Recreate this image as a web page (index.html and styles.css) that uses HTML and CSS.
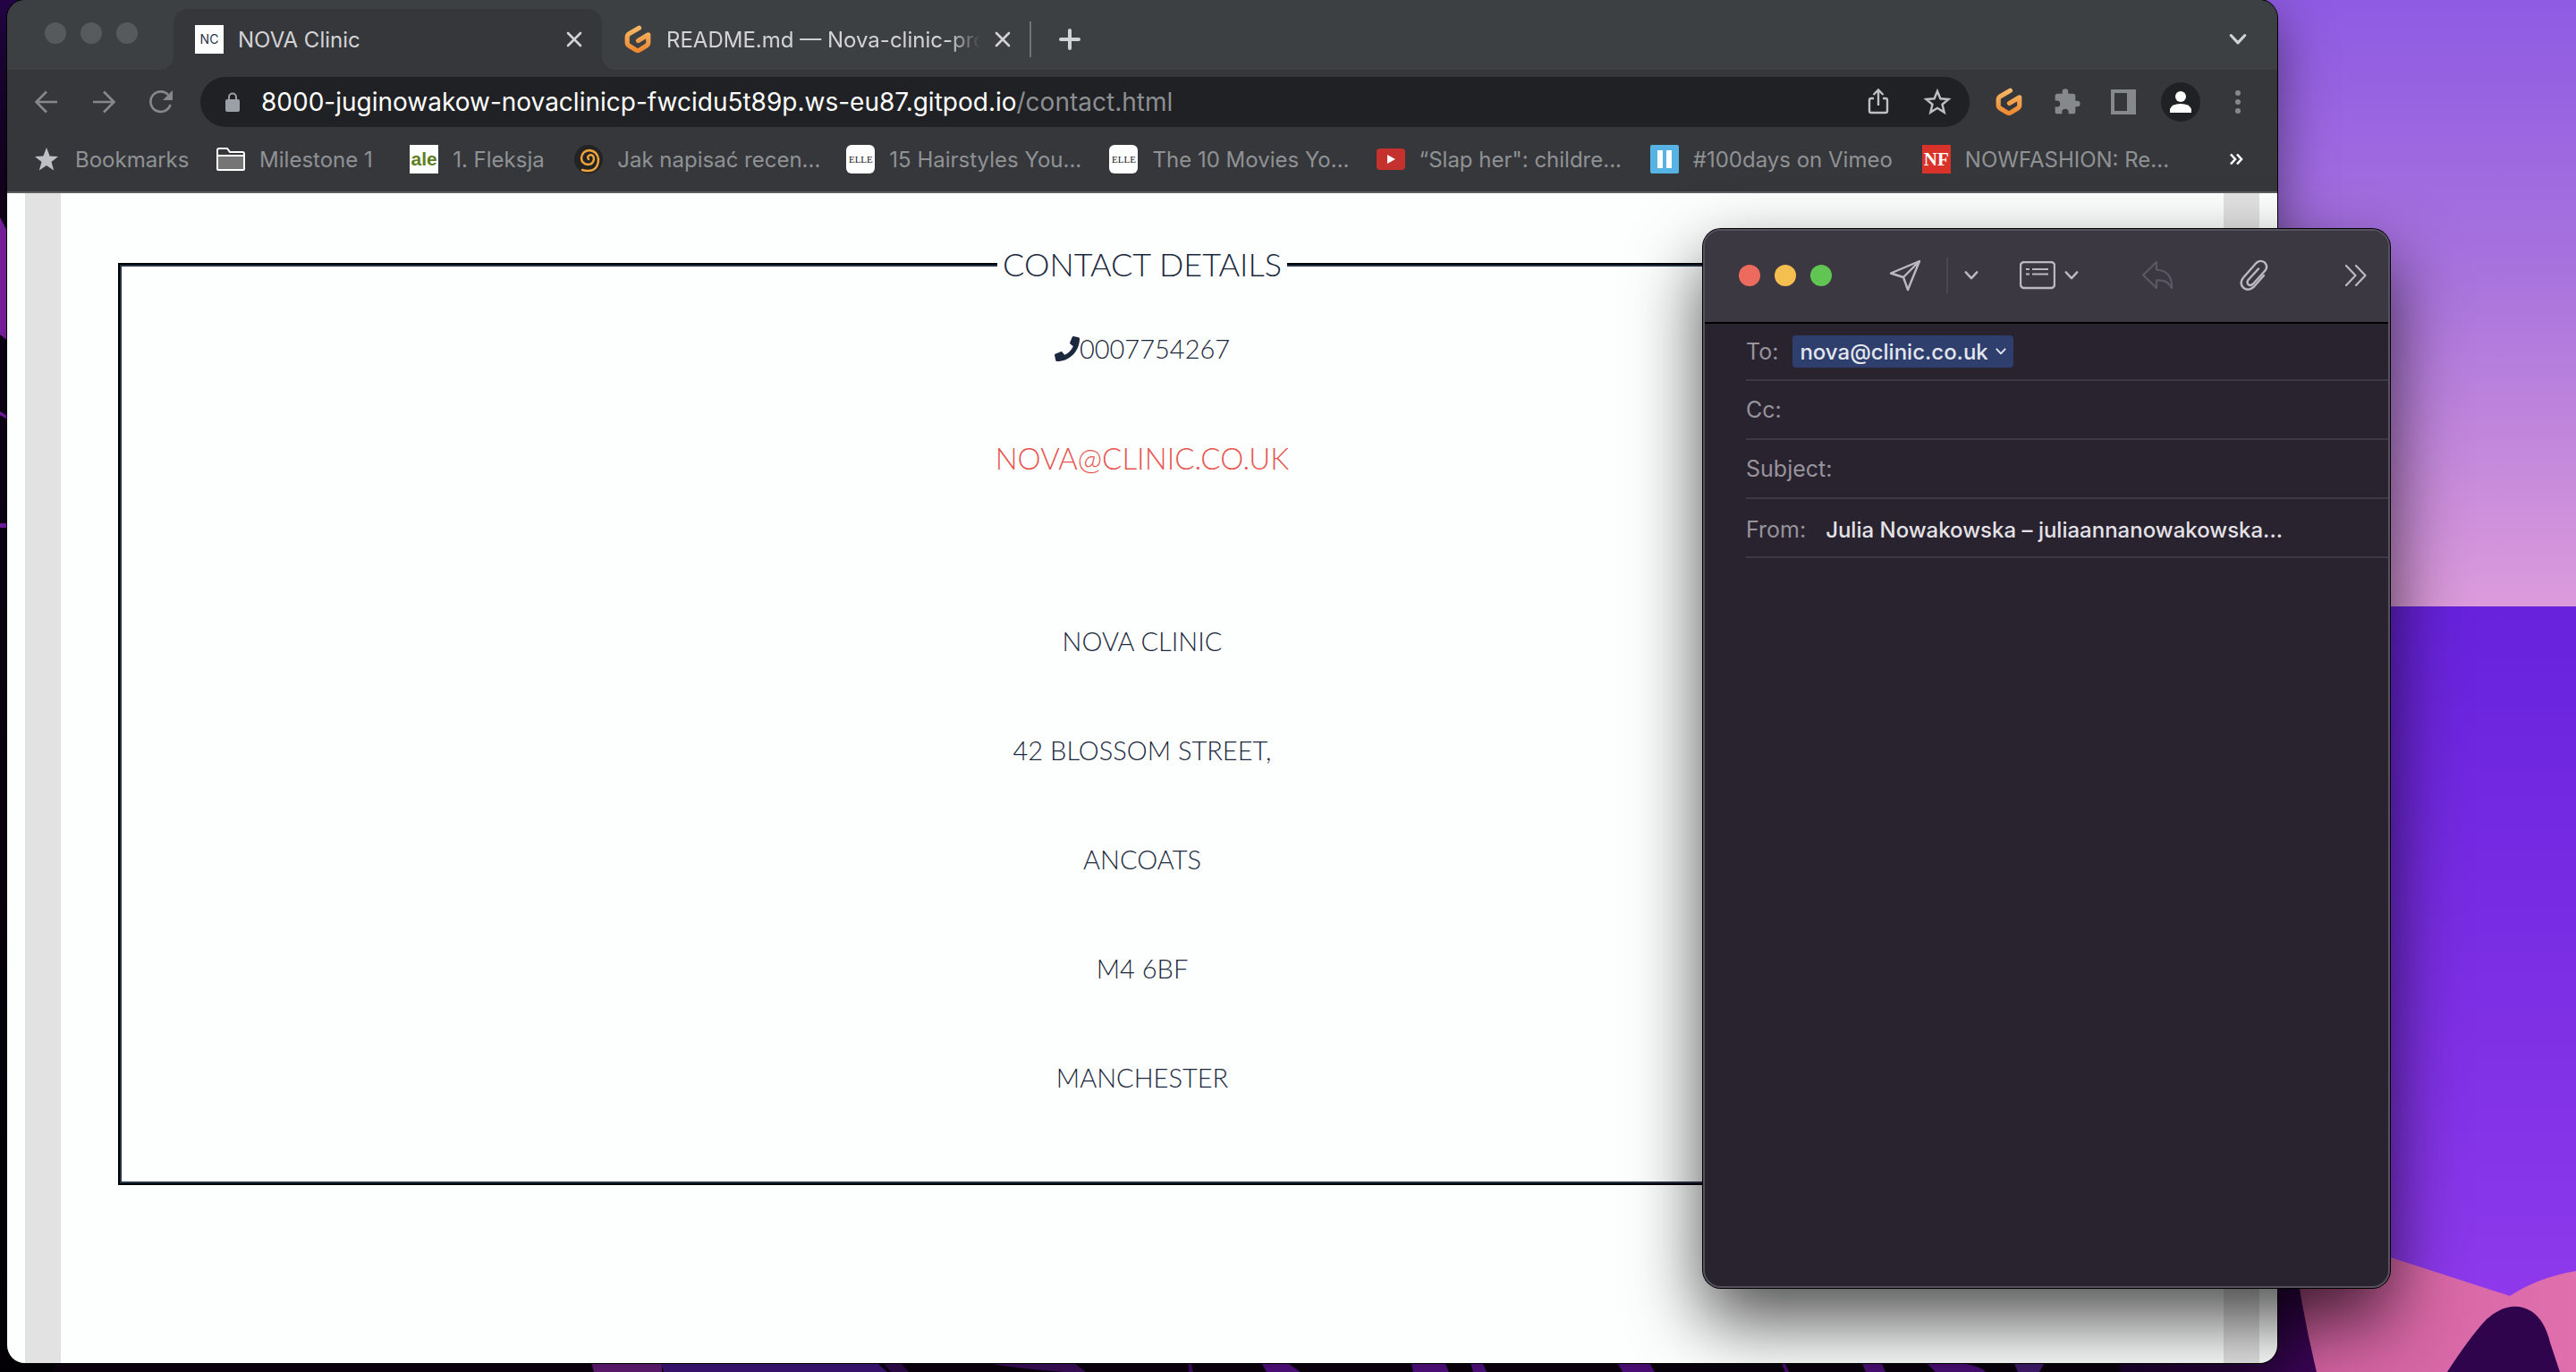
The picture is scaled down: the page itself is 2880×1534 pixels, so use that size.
FILE: index.html
```html
<!DOCTYPE html>
<html lang="en">
<head>
<meta charset="utf-8">
<title>NOVA Clinic</title>
<link rel="stylesheet" href="styles.css">
</head>
<body>
<svg class="defs" aria-hidden="true">
  <defs>
    <linearGradient id="amber" x1="0" y1="0" x2="0" y2="1"><stop offset="0" stop-color="#f5b765"/><stop offset="1" stop-color="#ef8a33"/></linearGradient>
    <symbol id="gitpod" viewBox="0 0 32 32"><path d="M17.500 3.200 L6.800 9.400 Q4.200 11 4.200 13.500 V19.500 Q4.200 22 6.800 23.500 L14 27.900 Q16 29.200 18 27.900 L25.200 23.500 Q27.800 22 27.800 19.500 V10.800 L16.500 17.400" fill="none" stroke="url(#amber)" stroke-width="5.200" stroke-linecap="round" stroke-linejoin="round"/></symbol>
    <symbol id="cross" viewBox="0 0 18 18"><path d="M2 2 16 16M16 2 2 16" fill="none" stroke="currentColor" stroke-width="2.600" stroke-linecap="round"/></symbol>
    <symbol id="down" viewBox="0 0 18 12"><path d="M2 2 9 9.500 16 2" fill="none" stroke="currentColor" stroke-width="2.800" stroke-linecap="round" stroke-linejoin="round"/></symbol>
  </defs>
</svg>

<svg class="wallpaper" viewBox="0 0 2880 1534" preserveAspectRatio="none" aria-hidden="true">
  <defs>
    <linearGradient id="sky" x1="0" y1="0" x2="0" y2="1"><stop offset="0" stop-color="#8f5be3"/><stop offset=".45" stop-color="#a873dd"/><stop offset="1" stop-color="#dc9bdb"/></linearGradient>
    <linearGradient id="sea" x1="0" y1="0" x2="0" y2="1"><stop offset="0" stop-color="#6722dc"/><stop offset="1" stop-color="#8f3aec"/></linearGradient>
    <linearGradient id="night" x1="0" y1="0" x2="0" y2="1"><stop offset="0" stop-color="#25054a"/><stop offset=".15" stop-color="#14001e"/><stop offset="1" stop-color="#040006"/></linearGradient>
    <linearGradient id="hill" x1="0" y1="0" x2="1" y2="0"><stop offset="0" stop-color="#d0609f"/><stop offset="1" stop-color="#e06fae"/></linearGradient>
    <linearGradient id="plum" x1="0" y1="0" x2="1" y2="0"><stop offset="0" stop-color="#26043c"/><stop offset="1" stop-color="#3c0558"/></linearGradient>
  </defs>
  <rect width="2880" height="1534" fill="#0e0012"/>
  <rect width="60" height="1534" fill="url(#night)"/>
  <path d="M0 243 10 262V382L0 374Z" fill="#9425c0"/>
  <path d="M0 460 12 467V471L0 464Z M0 585H12V590H0Z" fill="#8d21c4"/>
  <rect x="2500" width="380" height="678" fill="url(#sky)"/>
  <rect x="2500" y="678" width="380" height="800" fill="url(#sea)"/>
  <path d="M2560 1370 2673 1406 2806 1449Q2838 1428 2880 1421V1534H2560Z" fill="url(#hill)"/>
  <path d="M2500 1380H2562Q2572 1460 2590 1534H2370V1520H2500Z" fill="url(#plum)"/>
  <path d="M2736 1534Q2762 1494 2780 1475Q2806 1452 2830 1466Q2845 1476 2851 1501L2862 1534Z" fill="#30044c"/>
  <path d="M660 1520H740V1534H664Z" fill="#83259a"/>
  <path d="M738 1520H976L992 1534H742Z" fill="#521da0"/>
  <path d="M984 1520H1004L1016 1534H996Z" fill="#3d0d63"/>
  <path d="M1080 1520H1196L1214 1534H1190Q1130 1530 1080 1520Z M1328 1520H1331L1334 1534H1329Z" fill="#4f1278"/>
  <path d="M1408 1520H1434L1454 1534H1416Z M1577 1520H1614L1620 1534H1580Z M1643 1520H1656L1662 1534H1647Z M1806 1520H1842L1850 1534H1814Z M1990 1520H1994L2000 1534H1996Z M2080 1520H2102L2108 1534H2086Z M2152 1522Q2210 1522 2220 1534H2164Z" fill="#6c14aa"/>
  <path d="M2250 1520H2288L2280 1534H2256Z" fill="#5c279c"/>
</svg>

<div class="desktop">
<section class="browser">
  <header class="tabstrip">
    <div class="lights lights-idle"><i></i><i></i><i></i></div>
    <div class="tab tab-active">
      <span class="fav fav-nc">NC</span>
      <span class="tab-title">NOVA Clinic</span>
      <button class="bare" aria-label="Close tab"><svg class="i18"><use href="#cross"/></svg></button>
    </div>
    <div class="tab">
      <svg class="i32"><use href="#gitpod"/></svg>
      <span class="tab-title tab-fade">README.md — Nova-clinic-pro</span>
      <button class="bare" aria-label="Close tab"><svg class="i18"><use href="#cross"/></svg></button>
    </div>
    <button class="bare new-tab" aria-label="New tab"><svg class="i24" viewBox="0 0 24 24"><path d="M12 2V22M2 12H22" stroke="currentColor" stroke-width="4" stroke-linecap="round"/></svg></button>
    <button class="bare tab-search" aria-label="Search tabs"><svg class="chev"><use href="#down"/></svg></button>
  </header>

  <nav class="toolbar">
    <button class="bare" aria-label="Back"><svg class="i28" viewBox="0 0 28 28"><path d="M26 14H3M14 2.500 2.500 14 14 25.500" fill="none" stroke="currentColor" stroke-width="2.600"/></svg></button>
    <button class="bare" aria-label="Forward"><svg class="i28" viewBox="0 0 28 28"><path d="M2 14H25M14 2.500 25.500 14 14 25.500" fill="none" stroke="currentColor" stroke-width="2.600"/></svg></button>
    <button class="bare" aria-label="Reload"><svg class="i28" viewBox="0 0 28 28"><path d="M24.500 17A11.300 11.300 0 1 1 22 6" fill="none" stroke="currentColor" stroke-width="2.600"/><path d="M27 1V12H16Z" fill="currentColor"/></svg></button>
    <div class="omnibox">
      <svg class="lock" viewBox="0 0 16 22"><path d="M4 10V5.500a4 4 0 0 1 8 0V10" fill="none" stroke="currentColor" stroke-width="2"/><rect y="8" width="16" height="14" rx="2" fill="currentColor"/></svg>
      <p class="url">8000-juginowakow-novaclinicp-fwcidu5t89p.ws-eu87.gitpod.io<span>/contact.html</span></p>
      <button class="bare" aria-label="Share"><svg class="i32" viewBox="0 0 32 32"><path d="M11 12H8Q6 12 6 14V26Q6 28 8 28H24Q26 28 26 26V14Q26 12 24 12H21M16 20V3M10.500 8 16 2.500 21.500 8" fill="none" stroke="currentColor" stroke-width="2.400"/></svg></button>
      <button class="bare" aria-label="Bookmark this page"><svg class="i32" viewBox="0 0 32 32"><path d="M16 4 19.400 12.300 28.500 13 21.500 18.800 23.700 27.600 16 22.800 8.300 27.600 10.500 18.800 3.500 13 12.600 12.300Z" fill="none" stroke="currentColor" stroke-width="2.400"/></svg></button>
    </div>
    <div class="extensions">
      <button class="bare" aria-label="Gitpod"><svg class="i32"><use href="#gitpod"/></svg></button>
      <button class="bare" aria-label="Extensions"><svg class="i32" viewBox="0 0 24 24"><path d="M20.500 11H19V7a2 2 0 0 0-2-2h-4V3.500a2.500 2.500 0 0 0-5 0V5H4a2 2 0 0 0-2 2v3.800h1.500a2.700 2.700 0 0 1 0 5.400H2V20a2 2 0 0 0 2 2h3.800v-1.500a2.700 2.700 0 0 1 5.400 0V22H17a2 2 0 0 0 2-2v-4h1.500a2.500 2.500 0 0 0 0-5Z" fill="currentColor"/></svg></button>
      <button class="bare" aria-label="Side panel"><svg class="i28" viewBox="0 0 28 28"><path fill-rule="evenodd" d="M0 0H28V28H0ZM4 4V24H18V4Z" fill="currentColor"/></svg></button>
    </div>
    <button class="bare avatar" aria-label="Profile"><svg class="i24" viewBox="0 0 24 24"><circle cx="12" cy="6" r="6" fill="#fff"/><path d="M0 24V20Q2 14 12 14T24 20V24Z" fill="#fff"/></svg></button>
    <button class="bare" aria-label="Menu"><svg class="i28" viewBox="0 0 28 28"><g fill="currentColor"><circle cx="14" cy="4" r="3"/><circle cx="14" cy="14" r="3"/><circle cx="14" cy="24" r="3"/></g></svg></button>
  </nav>

  <nav class="bookmarks">
    <a href="#"><svg class="i32" viewBox="0 0 32 32"><path d="M16 3 19.600 12.500 29 13 21.500 19 24.200 28.500 16 23 7.800 28.500 10.500 19 3 13 12.400 12.500Z" fill="#bdc1c6"/></svg>Bookmarks</a>
    <a href="#"><svg class="i32" viewBox="0 0 32 32"><path d="M1 6Q1 4 3 4H12L15 8H29Q31 8 31 10V27Q31 28 30 28H2Q1 28 1 27Z" fill="#36373b" stroke="#fff" stroke-width="2"/><path d="M2 12H30V27H2Z" fill="#757575"/><path d="M1 12H31" stroke="#fff" stroke-width="2"/></svg>Milestone 1</a>
    <a href="#"><span class="fav fav-ale">ale</span>1. Fleksja</a>
    <a href="#"><svg class="i32" viewBox="0 0 32 32"><circle cx="16" cy="16" r="16" fill="#232323"/><path d="M16 16q-2-3 1-4.500q5-1 5 4.500q-1 6-7 6q-7-1-7-7.500q1-8 9-8.500q9 1 10 10q0 9-6 12q-6 2-12 0" fill="none" stroke="#f0a33a" stroke-width="2.500" stroke-linecap="round"/></svg>Jak napisać recen...</a>
    <a href="#"><span class="fav fav-elle">ELLE</span>15 Hairstyles You...</a>
    <a href="#"><span class="fav fav-elle">ELLE</span>The 10 Movies Yo...</a>
    <a href="#"><svg class="i32" viewBox="0 0 32 32"><rect y="4" width="32" height="24" rx="4" fill="#c5322d"/><path d="M12 11V21L21 16Z" fill="#fff"/></svg>“Slap her": childre...</a>
    <a href="#"><svg class="i32" viewBox="0 0 32 32"><rect width="32" height="32" rx="2" fill="#56b3e4"/><path d="M8 6H14V26H8ZM18 6H24V26H18Z" fill="#fff"/></svg>#100days on Vimeo</a>
    <a href="#"><span class="fav fav-nf">NF</span>NOWFASHION: Re...</a>
    <button class="bare" aria-label="More bookmarks"><svg class="i16" viewBox="0 0 16 16"><path d="M2 2.500 7 8 2 13.500M9 2.500 14 8 9 13.500" fill="none" stroke="#fff" stroke-width="2.600"/></svg></button>
  </nav>

  <main class="page">
    <fieldset class="contact">
      <legend>CONTACT DETAILS</legend>
      <p><svg class="phone" viewBox="0 0 512 512"><path d="M493.400 24.600l-104-24c-11.300-2.600-22.900 3.300-27.500 13.900l-48 112c-4.200 9.800-1.400 21.300 6.900 28l60.600 49.600c-36 76.700-98.900 140.500-177.200 177.200l-49.600-60.600c-6.800-8.300-18.200-11.100-28-6.900l-112 48C3.900 366.500-2 378.100.600 389.400l24 104C27.100 504.200 36.700 512 48 512c256.100 0 464-207.500 464-464 0-11.200-7.700-20.900-18.600-23.400z" fill="currentColor"/></svg>0007754267</p>
      <p class="mail-line"><a href="mailto:nova@clinic.co.uk">NOVA@CLINIC.CO.UK</a></p>
      <address>
        <p>NOVA CLINIC</p>
        <p>42 BLOSSOM STREET,</p>
        <p>ANCOATS</p>
        <p>M4 6BF</p>
        <p>MANCHESTER</p>
      </address>
    </fieldset>
  </main>
</section>
</div>

<form class="mail">
  <div class="mail-bar">
    <div class="lights"><i class="red"></i><i class="yellow"></i><i class="green"></i></div>
    <button type="button" class="bare send" aria-label="Send"><svg class="i36" viewBox="0 0 36 36"><path d="M34 2 2 15.500 16 20 21 34Z M34 2 16 20" fill="none" stroke="currentColor" stroke-width="2.400" stroke-linejoin="round"/></svg></button>
    <button type="button" class="bare send-more" aria-label="Send options"><svg class="chev-s"><use href="#down"/></svg></button>
    <button type="button" class="bare fields" aria-label="Header fields"><svg class="list" viewBox="0 0 40 32"><rect x="1" y="1" width="38" height="29" rx="4" fill="none" stroke="currentColor" stroke-width="2.400"/><path d="M7 9H11M14 9H32M7 14.500H11M14 14.500H32" stroke="currentColor" stroke-width="2.200"/></svg><svg class="chev-s"><use href="#down"/></svg></button>
    <button type="button" class="bare reply" aria-label="Reply" disabled><svg class="i36" viewBox="0 0 36 36"><path d="M17 3 2 17.500 17 32V23.500Q29 22 34 32Q35 13 17 11.500Z" fill="none" stroke="currentColor" stroke-width="2.200" stroke-linejoin="round"/></svg></button>
    <button type="button" class="bare clip" aria-label="Attach"><svg class="i36" viewBox="0 0 36 36"><path d="M29 18 18 30.500Q12 36 6.500 32Q1 27 6 20.500L20.500 4Q25 0 30 3.500Q34 8 30.500 12.500L17 27.500Q14 30 11.500 28Q9.500 25.500 11.500 23L23 10.500" fill="none" stroke="currentColor" stroke-width="2.400" stroke-linecap="round"/></svg></button>
    <button type="button" class="bare" aria-label="More"><svg class="i24" viewBox="0 0 24 24"><path d="M1 1 11.500 12 1 23M12 1 22.500 12 12 23" fill="none" stroke="currentColor" stroke-width="2.200" stroke-linecap="round" stroke-linejoin="round"/></svg></button>
  </div>
  <div class="field field-to"><label for="to">To:</label><button type="button" id="to" class="chip">nova@clinic.co.uk<svg class="chev-xs"><use href="#down"/></svg></button></div>
  <div class="field"><label for="cc">Cc:</label><input id="cc" type="text"></div>
  <div class="field"><label for="subject">Subject:</label><input id="subject" type="text"></div>
  <div class="field field-from"><label for="from">From:</label><select id="from"><option>Julia Nowakowska – juliaannanowakowska...</option></select></div>
  <textarea class="message" aria-label="Message"></textarea>
</form>
</body>
</html>
```
FILE: styles.css
```css
* { box-sizing: border-box; }

body {
  margin: 0;
  min-height: 100vh;
  overflow: hidden;
  background: #0e0012;
  font-family: Inter, "Liberation Sans", sans-serif;
  font-size: 24px;
  color: #e6e6e6;
}

p { margin: 0; }
svg { display: block; flex: none; }
.defs { position: absolute; width: 0; height: 0; }
.wallpaper { position: absolute; inset: 0; width: 100%; height: 100vh; }

.bare {
  display: flex;
  align-items: center;
  padding: 0;
  border: 0;
  background: none;
  color: inherit;
}

.i16 { width: 16px; height: 16px; }
.i18 { width: 18px; height: 18px; }
.i24 { width: 24px; height: 24px; }
.i28 { width: 28px; height: 28px; }
.i32 { width: 32px; height: 32px; }
.i36 { width: 36px; height: 36px; }
.chev { width: 20px; height: 14px; }
.chev-s { width: 16px; height: 12px; }
.chev-xs { width: 12px; height: 8px; }

.lights { display: flex; gap: 16px; }
.lights i { width: 24px; height: 24px; border-radius: 50%; background: #575a5d; }
.lights .red { background: #ed6a5e; }
.lights .yellow { background: #f5bf4f; }
.lights .green { background: #61c554; }

/* Browser window */
.desktop {
  display: flex;
  height: 100vh;
  padding: 0 334px 10px 8px;
}
.browser {
  position: relative;
  display: flex;
  flex-direction: column;
  flex: 1;
  min-width: 0;
  overflow: hidden;
  border-radius: 20px;
  background: #36373b;
  box-shadow: 0 0 0 1px #000, 0 20px 60px rgba(0, 0, 0, .5);
}

.tabstrip {
  display: flex;
  align-items: center;
  height: 78px;
  padding: 10px 34px 0 0;
  background: #3d4042;
  color: #d2d3d5;
}
.lights-idle { width: 186px; padding: 0 0 14px 42px; }
.tab {
  display: flex;
  align-items: center;
  align-self: stretch;
  gap: 16px;
  width: 479px;
  padding: 0 22px 0 24px;
}
.tab-active {
  position: relative;
  border-radius: 16px 16px 0 0;
  background: #36373b;
}
.tab-active::before,
.tab-active::after {
  content: "";
  position: absolute;
  bottom: 0;
  width: 16px;
  height: 16px;
}
.tab-active::before { right: 100%; background: radial-gradient(circle at 0 0, transparent 16px, #36373b 16px); }
.tab-active::after { left: 100%; background: radial-gradient(circle at 100% 0, transparent 16px, #36373b 16px); }
.tab-title { flex: 1; white-space: nowrap; }
.tab-fade { flex-basis: 0; min-width: 0; mask-image: linear-gradient(90deg, #000 90%, transparent); }
.new-tab { padding-left: 32px; }
.new-tab::before { content: ""; width: 2px; height: 40px; margin: 0 31px 0 -33px; background: #707376; }
.tab-search { margin-left: auto; }

.fav {
  display: grid;
  flex: none;
  place-items: center;
  width: 32px;
  height: 32px;
  background: #fff;
  line-height: 32px;
}
.fav-nc { color: #26344a; font-size: 14px; }
.fav-ale { color: #5d7f1e; font-size: 21px; font-weight: 700; font-family: "Liberation Sans", sans-serif; }
.fav-elle { border-radius: 6px; color: #222; font: 11px/32px "Liberation Serif", serif; }
.fav-nf { background: #d93229; color: #fff; font: bold 21px/32px "Liberation Serif", serif; }

.toolbar {
  display: flex;
  align-items: center;
  gap: 36px;
  height: 72px;
  padding: 0 30px;
  color: #86898b;
}
.omnibox {
  display: flex;
  flex: 1;
  align-items: center;
  gap: 34px;
  height: 56px;
  min-width: 0;
  margin: 0 -8px 0 -6px;
  padding: 0 20px 0 28px;
  border-radius: 28px;
  background: #202124;
  color: #bdc1c4;
}
.lock { width: 16px; height: 22px; margin-right: -10px; color: #9aa0a6; }
.url { flex: 1; font-size: 28px; color: #fff; white-space: nowrap; }
.url span { color: #8c8f92; }
.extensions { display: flex; align-items: center; gap: 33px; }
.avatar { width: 44px; height: 44px; margin: 0 -8px; justify-content: center; border-radius: 50%; background: #202124; }

.bookmarks {
  display: grid;
  grid-template-columns: 206fr 216fr 184fr 304fr 294fr 298fr 306fr 304fr 343fr 18px;
  align-items: center;
  height: 66px;
  padding: 0 36px 8px 28px;
  border-bottom: 2px solid #5d5e63;
}
.bookmarks a {
  display: flex;
  align-items: center;
  gap: 16px;
  color: #8f9294;
  text-decoration: none;
  white-space: nowrap;
}

/* Clinic page */
.page {
  flex: 1;
  padding: 54px 64px 0;
  background: #fdfffe;
  margin: 0 20px;
  border: solid #e2e2e2;
  border-width: 0 40px;
  box-shadow: 0 0 0 20px #fdfffe;
  clip-path: inset(0 -20px);
  font-family: Lato, sans-serif;
  font-size: 29px;
  font-weight: 300;
  line-height: 34px;
  color: #1b283d;
  text-align: center;
}
.contact {
  margin: 0;
  padding: 53px 0 101px;
  border: 2px solid #000;
  box-shadow: inset 0 0 0 2px #26344a;
}
.contact legend { padding: 0 6px; background: #fdfffe; font-size: 36px; line-height: 50px; }
.contact p { display: flex; justify-content: center; align-items: center; margin-bottom: 88px; }
.contact .mail-line { margin-bottom: 171px; font-size: 33px; }
.contact a { color: #e8554f; text-decoration: none; }
.contact address { font-style: normal; }
.contact address p:last-child { margin: 0; }
.phone { width: 28px; height: 28px; }

/* Mail compose window */
.mail {
  position: absolute;
  top: 256px;
  right: 208px;
  display: flex;
  flex-direction: column;
  width: 768px;
  height: 1184px;
  overflow: hidden;
  border: 2px solid #55525d;
  border-radius: 20px;
  background: #292330;
  box-shadow: 0 0 0 1px #000, 0 36px 80px rgba(0, 0, 0, .7);
  font-size: 25px;
}
.mail-bar {
  display: flex;
  align-items: center;
  height: 104px;
  padding: 0 24px 2px 38px;
  border-bottom: 2px solid #000;
  background: #3c3842;
  color: #bbb8c1;
}
.send { margin-left: 64px; }
.send-more { margin-left: 28px; }
.send-more::before { content: ""; width: 2px; height: 40px; margin-right: 18px; background: #4a4650; }
.fields { gap: 10px; margin-left: 46px; }
.list { width: 40px; height: 32px; }
.reply { margin-left: 70px; color: #5c5863; }
.clip { margin: 0 auto 0 72px; }
.field {
  display: flex;
  align-items: center;
  gap: 16px;
  height: 66px;
  margin-left: 46px;
  border-bottom: 2px solid #3d3844;
  color: #97939c;
}
.field-to { height: 64px; }
.field-from { gap: 22px; padding-top: 4px; }
.field input,
.field select,
.message {
  flex: 1;
  min-width: 0;
  padding: 0;
  border: 0;
  outline: 0;
  appearance: none;
  resize: none;
  background: none;
  color: #e4e2e6;
  font: 500 24px Inter, sans-serif;
}
.chip {
  display: flex;
  align-items: center;
  gap: 8px;
  height: 36px;
  padding: 0 8px;
  border: 0;
  border-radius: 4px;
  background: #2e3f6e;
  color: #e4e6ee;
  font: 500 24px Inter, sans-serif;
}
```
